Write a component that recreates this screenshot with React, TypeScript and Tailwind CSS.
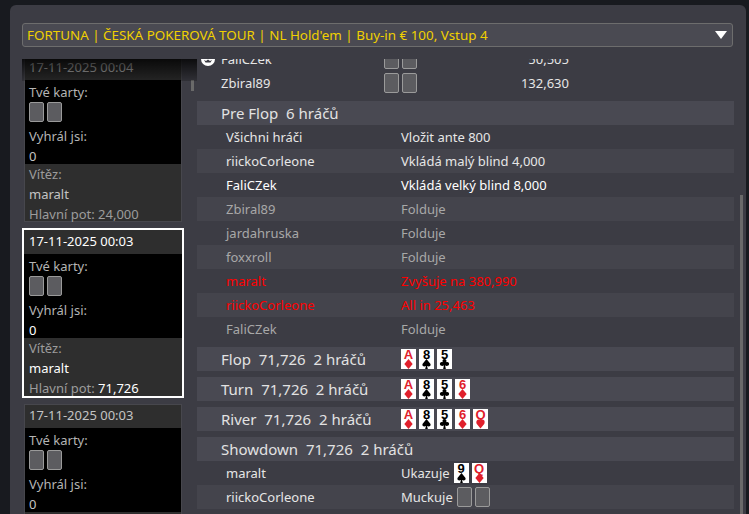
const FONT = "font-['Noto_Sans',sans-serif]";

type Suit = "d" | "s" | "c" | "h";

const SUITS: Record<Suit, { color: string; path: string }> = {
  d: { color: "#e0202c", path: "M5 0 L10 6 L5 12 L0 6 Z" },
  h: { color: "#e0202c", path: "M5 11.5 L0.6 6 C-1 3 1 0.5 3 0.5 C4 0.5 4.7 1 5 2 C5.3 1 6 0.5 7 0.5 C9 0.5 11 3 9.4 6 Z" },
  s: { color: "#000000", path: "M5 0 L9.6 5.6 C11 8 8 10 5.6 8.4 L6.6 12 L3.4 12 L4.4 8.4 C2 10 -1 8 0.4 5.6 Z" },
  c: { color: "#000000", path: "M5 0 C7 0 8 1.8 7 3.8 C9.4 3 11 4.6 10.4 6.6 C9.8 8.6 7 8.8 5.7 7.6 L6.6 12 L3.4 12 L4.3 7.6 C3 8.8 0.2 8.6 -0.4 6.6 C-1 4.6 0.6 3 3 3.8 C2 1.8 3 0 5 0 Z" },
};

function PlayingCard({ rank, suit }: { rank: string; suit: Suit }) {
  const s = SUITS[suit];
  return (
    <div className="flex h-5 w-[15px] flex-col items-center bg-white">
      <span
        className="h-[10px] font-['Liberation_Sans',sans-serif] text-[13px] font-bold leading-[11px]"
        style={{ color: s.color }}
      >
        {rank}
      </span>
      <svg viewBox="-1 0 12 12" className="h-[10px] w-[11px]">
        <path d={s.path} fill={s.color} />
      </svg>
    </div>
  );
}

function BlankCard() {
  return <div className="h-5 w-[15px] rounded-[2px] border border-[#9a9a9a] bg-[#5c5c60]" />;
}

function BlankPair() {
  return (
    <div className="flex gap-[3px]">
      <BlankCard />
      <BlankCard />
    </div>
  );
}

function HandCard({
  date,
  pot,
  selected,
  dim,
}: {
  date: string;
  pot: string;
  selected?: boolean;
  dim?: boolean;
}) {
  const val = selected ? "text-white" : "text-[#c4c4c4]";
  const inset = selected ? "pl-[5px]" : "pl-1";
  return (
    <div className={selected ? "-mx-[3px] border-2 border-white" : "ring-1 ring-[#47474d]"}>
      <div className={`flex items-center bg-[#2e2e2e] pb-px text-[13px] ${inset} ${val} ${selected ? "h-6" : "h-[23px]"}`}>
        {date}
      </div>
      <div className={`flex h-[84px] flex-col bg-black text-[13px] text-[#b4b4b4] ${inset}`}>
        <div className="mt-[2px] h-[20px] leading-[20px]">Tvé karty:</div>
        <BlankPair />
        <div className="mt-[2px] h-6 leading-6">Vyhrál jsi:</div>
        <div className={`h-4 leading-4 ${val}`}>0</div>
      </div>
      <div className={`flex flex-col bg-[#2e2e2e] text-[13px] leading-5 text-[#9c9c9c] ${inset} ${selected ? "h-[58px]" : "h-[57px]"}`}>
        <div>Vítěz:</div>
        <div className={val}>maralt</div>
        <div>
          Hlavní pot: <span className={dim ? "" : val}>{pot}</span>
        </div>
      </div>
    </div>
  );
}

function ActionRow({
  name,
  action,
  tone,
  shade,
  children,
}: {
  name: string;
  action?: string;
  tone?: string;
  shade?: boolean;
  children?: React.ReactNode;
}) {
  return (
    <div className={`flex h-6 items-center pl-[29px] text-[13px] ${shade ? "bg-[#44444c]" : ""} ${tone ?? "text-[#e6e6e6]"}`}>
      <div className="w-[175px] shrink-0 pt-[2px]">{name}</div>
      {action && <div className="mr-[4px] pt-[2px]">{action}</div>}
      {children}
    </div>
  );
}

function StreetRow({
  title,
  children,
  spaced,
}: {
  title: string;
  children?: React.ReactNode;
  spaced?: boolean;
}) {
  return (
    <div className={`flex h-6 items-center bg-[#494952] pl-6 text-[15px] text-[#e2e2e2] ${spaced ? "mt-[6px]" : ""}`}>
      <div className={`whitespace-pre ${children ? "w-[180px] shrink-0" : ""}`}>{title}</div>
      {children && <div className="flex gap-[3px]">{children}</div>}
    </div>
  );
}

export default function App() {
  return (
    <div className={`h-[514px] w-[749px] overflow-hidden bg-[#181a1f] pl-[10px] pr-[3px] pt-[5px] ${FONT}`}>
      <div className="relative flex h-[600px] flex-col rounded-[6px] bg-[#3c3c44] px-3 pt-[18px]">
        <div className="mr-[1px] flex h-6 items-center justify-between rounded-[3px] border border-[#6d6d6d] bg-[#4a4a52] pl-1 pr-[5px] text-[13.4px] text-[#f0d000]">
          <span>FORTUNA | ČESKÁ POKEROVÁ TOUR | NL Hold'em | Buy-in € 100, Vstup 4</span>
          <svg viewBox="0 0 12 8" className="h-2 w-3">
            <path d="M0 0 H12 L6 8 Z" fill="#ffffff" />
          </svg>
        </div>

        <div className="mt-3 flex min-h-0 flex-1">
          <div className="relative flex w-[175px] shrink-0 overflow-hidden">
            <div className="ml-[3px] mt-[-2px] flex w-[156px] shrink-0 flex-col gap-[7px]">
              <HandCard date="17-11-2025 00:04" pot="24,000" dim />
              <HandCard date="17-11-2025 00:03" pot="71,726" selected />
              <HandCard date="17-11-2025 00:03" pot="71,726" />
            </div>
            <div className="ml-[10px] mt-[21px] h-[11px] w-[3px] bg-[#6a6a6a]" />
            <div className="absolute inset-x-0 top-0 h-[22px] bg-gradient-to-b from-[#000000cc] to-[#00000033]" />
          </div>

          <div className="min-w-0 flex-1 overflow-hidden">
            <div className="-mt-3 relative">
              <svg viewBox="0 0 14 14" className="absolute left-[4px] top-[5px] h-[14px] w-[14px]">
                <circle cx="7" cy="7" r="7" fill="#ffffff" />
                <path d="M3 8 L4.5 10.5 H9.5 L11 8 L9 9 L7 7.5 L5 9 Z" fill="#3c3c44" />
              </svg>
              <div className="flex h-6 items-center pl-6 text-[13px] text-[#e6e6e6]">
                <div className="w-[163px] shrink-0 pt-[2px]">FaliCZek</div>
                <BlankPair />
                <div className="w-[152px] pt-[2px] text-right">50,505</div>
              </div>
              <div className="flex h-6 items-center pl-6 text-[13px] text-[#e6e6e6]">
                <div className="w-[163px] shrink-0 pt-[2px]">Zbiral89</div>
                <BlankPair />
                <div className="w-[152px] pt-[2px] text-right">132,630</div>
              </div>
              <StreetRow title="Pre Flop  6 hráčů" spaced />
              <ActionRow name="Všichni hráči" action="Vložit ante 800" />
              <ActionRow name="riickoCorleone" action="Vkládá malý blind 4,000" shade />
              <ActionRow name="FaliCZek" action="Vkládá velký blind 8,000" tone="text-white" />
              <ActionRow name="Zbiral89" action="Folduje" tone="text-[#a8a8a8]" shade />
              <ActionRow name="jardahruska" action="Folduje" tone="text-[#a8a8a8]" />
              <ActionRow name="foxxroll" action="Folduje" tone="text-[#a8a8a8]" shade />
              <ActionRow name="maralt" action="Zvyšuje na 380,990" tone="text-[#ff0000]" />
              <ActionRow name="riickoCorleone" action="All in 25,463" tone="text-[#ff0000]" shade />
              <ActionRow name="FaliCZek" action="Folduje" tone="text-[#a8a8a8]" />
              <StreetRow title="Flop  71,726  2 hráčů" spaced>
                <PlayingCard rank="A" suit="d" />
                <PlayingCard rank="8" suit="s" />
                <PlayingCard rank="5" suit="c" />
              </StreetRow>
              <StreetRow title="Turn  71,726  2 hráčů" spaced>
                <PlayingCard rank="A" suit="d" />
                <PlayingCard rank="8" suit="s" />
                <PlayingCard rank="5" suit="c" />
                <PlayingCard rank="6" suit="d" />
              </StreetRow>
              <StreetRow title="River  71,726  2 hráčů" spaced>
                <PlayingCard rank="A" suit="d" />
                <PlayingCard rank="8" suit="s" />
                <PlayingCard rank="5" suit="c" />
                <PlayingCard rank="6" suit="d" />
                <PlayingCard rank="Q" suit="h" />
              </StreetRow>
              <StreetRow title="Showdown  71,726  2 hráčů" spaced />
              <ActionRow name="maralt" action="Ukazuje">
                <div className="flex gap-[3px]">
                  <PlayingCard rank="9" suit="s" />
                  <PlayingCard rank="Q" suit="d" />
                </div>
              </ActionRow>
              <ActionRow name="riickoCorleone" action="Muckuje" shade>
                <BlankPair />
              </ActionRow>
            </div>
          </div>
        </div>

        <div className="absolute right-[3px] top-[190px] h-[400px] w-[3px] bg-[#6a6a6a]" />
      </div>
    </div>
  );
}
